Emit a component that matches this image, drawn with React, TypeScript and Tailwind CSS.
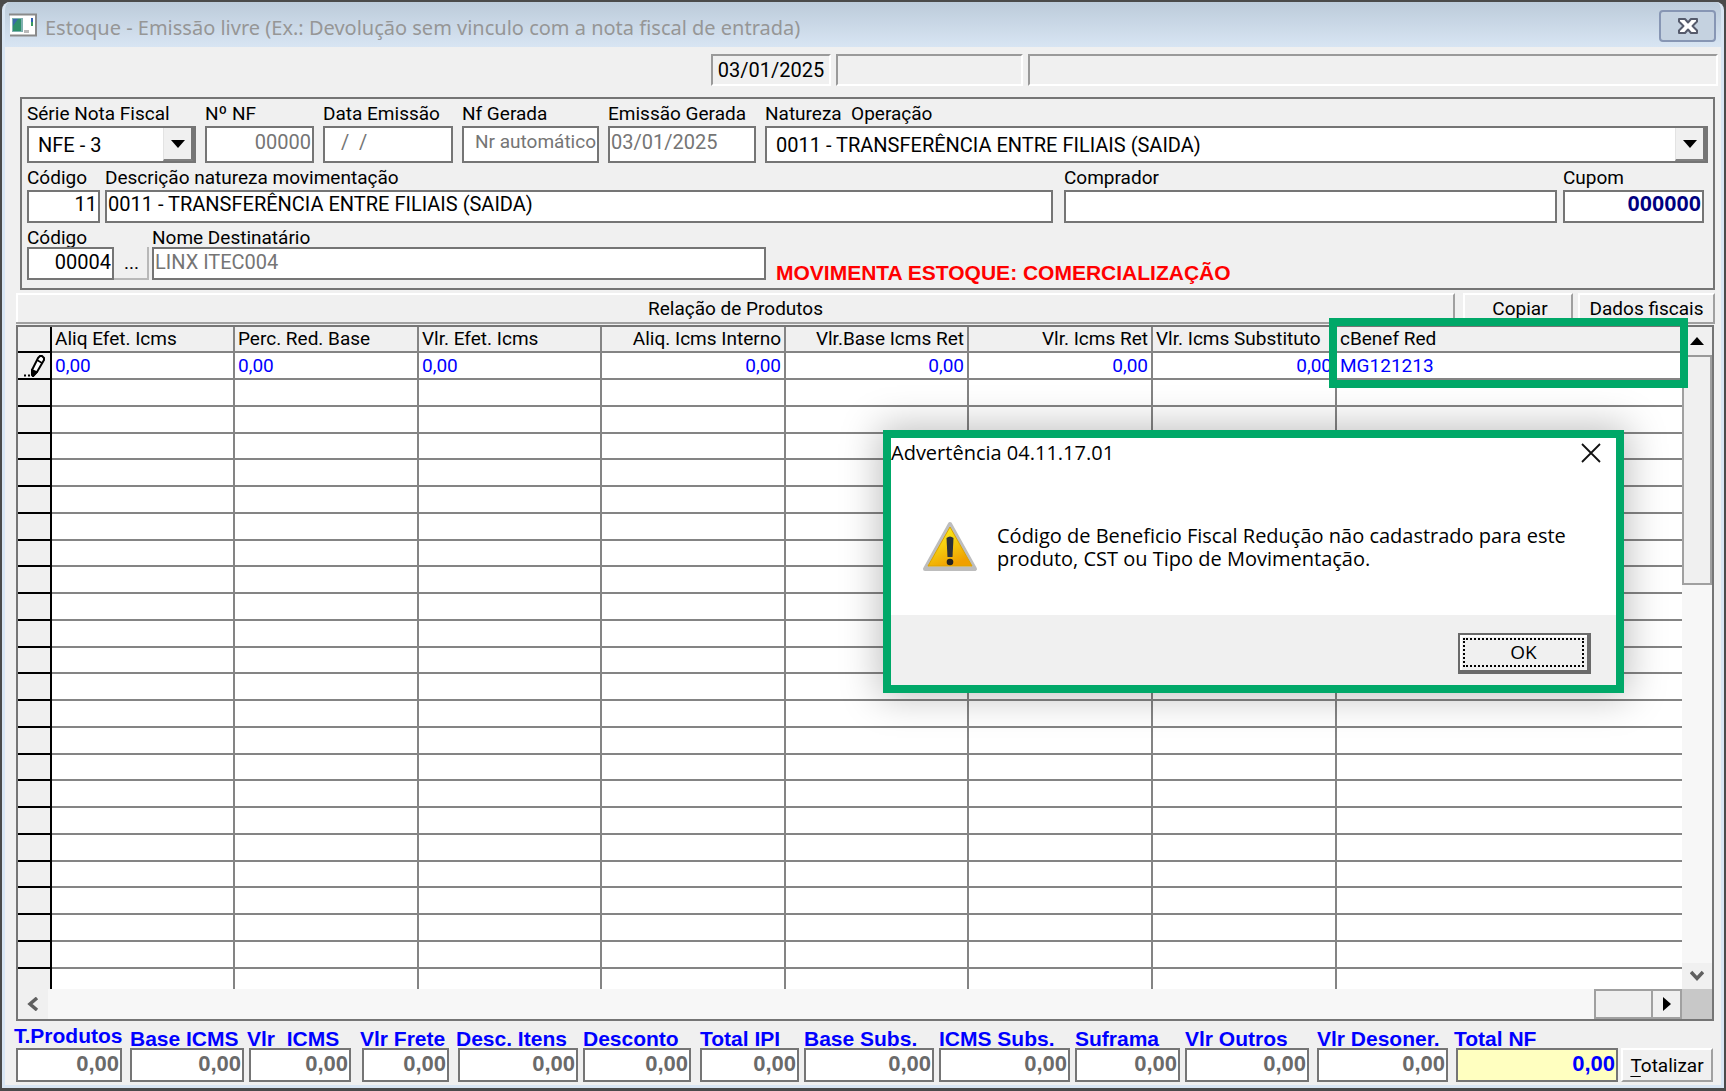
import type { ReactNode } from "react";

const field =
  "min-w-0 w-full border-2 border-[#757575] bg-white px-px outline-none rounded-none";

function Field({
  id,
  label,
  value,
  box,
  input,
  labelClass = "leading-[24px]",
}: {
  id: string;
  label: string;
  value: string;
  box: string;
  input: string;
  labelClass?: string;
}) {
  return (
    <div className={`flex flex-col ${box}`}>
      <label htmlFor={id} className={`h-[24px] whitespace-pre ${labelClass}`}>
        {label}
      </label>
      <input id={id} defaultValue={value} className={`${field} ${input}`} />
    </div>
  );
}

function Combo({ id, label, value, box }: { id: string; label: string; value: string; box: string }) {
  return (
    <div className={`flex flex-col ${box}`}>
      <label htmlFor={id} className="h-[24px] whitespace-pre leading-[24px]">
        {label}
      </label>
      <div className="relative flex h-[37px] border-2 border-[#757575] bg-white">
        <select id={id} className="w-full appearance-none bg-transparent pl-[9px] pr-[34px] text-[20px] outline-none">
          <option>{value}</option>
        </select>
        <span className="pointer-events-none absolute inset-y-0 right-0 flex w-[31px] items-center justify-center border-b-2 border-l border-r-[3px] border-b-[#808080] border-l-[#e3e3e3] border-r-[#757575] bg-[#f0f0f0]">
          <svg width="14" height="8" viewBox="0 0 14 8">
            <path d="M0 0H14L7 8Z" fill="#000" />
          </svg>
        </span>
      </div>
    </div>
  );
}

const columns = [
  { label: "Aliq Efet. Icms", value: "0,00", align: "text-left", head: "text-left w-[183px]" },
  { label: "Perc. Red. Base", value: "0,00", align: "text-left", head: "text-left w-[184px]" },
  { label: "Vlr. Efet. Icms", value: "0,00", align: "text-left", head: "text-left w-[183px]" },
  { label: "Aliq. Icms Interno", value: "0,00", align: "text-right", head: "text-right w-[184px]" },
  { label: "Vlr.Base Icms Ret", value: "0,00", align: "text-right", head: "text-right w-[183px]" },
  { label: "Vlr. Icms Ret", value: "0,00", align: "text-right", head: "text-right w-[184px]" },
  { label: "Vlr. Icms Substituto", value: "0,00", align: "text-right", head: "text-left w-[184px]" },
  { label: "cBenef Red", value: "MG121213", align: "text-left", head: "text-left" },
];

const totals = [
  { label: "T.Produtos", pad: "pr-2", lead: "leading-[20px] -ml-[2px]" },
  { label: "Base ICMS", pad: "pr-[5px]", lead: "leading-[26px]" },
  { label: "Vlr  ICMS", pad: "pr-[11px]", lead: "leading-[26px] -ml-[2px]" },
  { label: "Vlr Frete", pad: "pr-[9px]", lead: "leading-[26px] -ml-[2px]" },
  { label: "Desc. Itens", pad: "pr-[5px]", lead: "leading-[26px] -ml-[2px]" },
  { label: "Desconto", pad: "pr-[9px]", lead: "leading-[26px]" },
  { label: "Total IPI", pad: "pr-[5px]", lead: "leading-[26px]" },
  { label: "Base Subs.", pad: "pr-[5px]", lead: "leading-[26px]" },
  { label: "ICMS Subs.", pad: "pr-[5px]", lead: "leading-[26px]" },
  { label: "Suframa", pad: "pr-[5px]", lead: "leading-[26px]" },
  { label: "Vlr Outros", pad: "pr-2", lead: "leading-[26px]" },
  { label: "Vlr Desoner.", pad: "pr-2", lead: "leading-[26px]" },
  { label: "Total NF", pad: "pr-[3px]", lead: "leading-[26px] -ml-[2px]" },
];

function TitleBar() {
  return (
    <header className="flex h-[45px] shrink-0 items-center bg-linear-to-b from-[#bccbda] to-[#d8e5f3] pl-[4px] pr-[5px]">
      <svg width="28" height="24" viewBox="0 0 28 24" className="shrink-0">
        <rect x="1" y="1" width="25" height="22" fill="#fff" />
        <path d="M0 1.500H27V22.500H1" fill="none" stroke="#8a8a8a" strokeWidth="2" />
        <rect x="3" y="5" width="11" height="14" fill="#7fb0b0" />
        <rect x="4" y="6" width="8" height="12" fill="#2f8f6a" />
        <path d="M4 6H9L4 13Z" fill="#3a68a8" />
        <path d="M15 18.500h5" stroke="#b9b9b9" strokeWidth="3" />
        <rect x="22" y="5" width="2" height="4" fill="#2d5fb0" />
        <rect x="22" y="9" width="2" height="4" fill="#3a9a60" />
      </svg>
      <h1 className="flex-1 pl-[8px] pt-[6px] font-['Noto_Sans',sans-serif] text-[20px] text-[#969696]">
        Estoque - Emissão livre (Ex.: Devolução sem vinculo com a nota fiscal de entrada)
      </h1>
      <button
        aria-label="Fechar"
        className="mt-[8px] flex h-[32px] w-[57px] items-center justify-center self-start rounded-[4px] border-2 border-[#8796b4] bg-[#c5d2e0]"
      >
        <svg width="22" height="18" viewBox="0 0 22 18">
          <path
            d="M2 2H8L11 5.500L14 2H20V4.500L15.500 9L20 13.500V16H14L11 12.500L8 16H2V13.500L6.500 9L2 4.500Z"
            fill="#fff"
            stroke="#565b6c"
            strokeWidth="2"
            strokeLinejoin="round"
          />
        </svg>
      </button>
    </header>
  );
}

function StatusBox({ className, children }: { className: string; children?: ReactNode }) {
  return (
    <div
      className={`flex h-[32px] items-center justify-center border-2 border-b-white border-l-[#9a9a9a] border-r-white border-t-[#9a9a9a] text-[20px] ${className}`}
    >
      {children}
    </div>
  );
}

function ProductGrid() {
  return (
    <section className="mr-[7px] flex min-h-0 flex-1 flex-col overflow-hidden border-2 border-[#757575]">
      <div className="flex min-h-0 flex-1">
        <div className="min-w-0 flex-1 overflow-hidden bg-white">
          <table className="w-full table-fixed border-separate border-spacing-0">
            <thead>
              <tr className="h-[26px]">
                <th className="w-[34px] border-b-2 border-r-2 border-black bg-[#f0f0f0]" aria-label="Linha" />
                {columns.map((c, i) => (
                  <th
                    key={c.label}
                    className={`whitespace-nowrap border-b-2 border-[#848484] bg-[#f0f0f0] px-[3px] py-0 font-normal leading-[24px] ${c.head} ${i < 7 ? "border-r-2" : ""}`}
                  >
                    {c.label}
                  </th>
                ))}
              </tr>
            </thead>
            <tbody>
              {Array.from({ length: 24 }, (_, r) => (
                <tr key={r} className="h-[27px] nth-[4n]:h-[26px]">
                  <td className="border-b-2 border-r-2 border-black bg-[#f0f0f0] p-0">
                    {r === 0 && (
                      <svg width="22" height="22" viewBox="0 0 22 22" className="ml-[6px] block">
                        <path d="M14 3L16 1H18L20 3V5L13 17L9 21L8 20V15Z" fill="#fff" stroke="#000" strokeWidth="2" />
                        <path d="M13 5L18 8M8 15L13 17L9 21.500Z" stroke="#000" strokeWidth="1.500" fill="#000" />
                        <path d="M0 20.500h2M4 20.500h2" stroke="#000" strokeWidth="2" />
                      </svg>
                    )}
                  </td>
                  {columns.map((c, i) => (
                    <td
                      key={c.label}
                      className={`border-b-2 border-[#848484] px-[3px] py-0 leading-[24px] text-[#0000ff] ${c.align} ${i < 7 ? "border-r-2" : ""}`}
                    >
                      {r === 0 ? c.value : ""}
                    </td>
                  ))}
                </tr>
              ))}
            </tbody>
          </table>
        </div>
        <div className="flex w-[30px] shrink-0 flex-col bg-[#f7f7f7]">
          <button aria-label="Rolar para cima" className="flex h-[30px] items-center justify-center border-b-2 border-[#999] bg-[#f0f0f0]">
            <svg width="14" height="8" viewBox="0 0 14 8">
              <path d="M0 8H14L7 0Z" fill="#000" />
            </svg>
          </button>
          <div className="h-[228px] border-2 border-t-0 border-[#a0a0a0] bg-[#f0f0f0]" />
          <div className="flex-1" />
          <button aria-label="Rolar para baixo" className="flex h-[26px] items-center justify-center bg-[#f0f0f0]">
            <svg width="14" height="12" viewBox="0 0 14 12">
              <path d="M1 2L7 8.500L13 2" fill="none" stroke="#606060" strokeWidth="3.500" />
            </svg>
          </button>
        </div>
      </div>
      <div className="flex h-[30px] shrink-0 bg-[#f7f7f7]">
        <button aria-label="Rolar para a esquerda" className="flex w-[30px] items-center justify-center bg-[#f0f0f0]">
          <svg width="12" height="14" viewBox="0 0 12 14">
            <path d="M10 1L3 7L10 13" fill="none" stroke="#606060" strokeWidth="3.500" />
          </svg>
        </button>
        <div className="flex-1" />
        <div className="w-[59px] border-2 border-[#a0a0a0] bg-[#f0f0f0]" />
        <button aria-label="Rolar para a direita" className="flex w-[29px] items-center justify-center border-2 border-l-0 border-[#a0a0a0] bg-[#f0f0f0]">
          <svg width="8" height="14" viewBox="0 0 8 14">
            <path d="M0 0V14L8 7Z" fill="#000" />
          </svg>
        </button>
        <div className="w-[30px] bg-[#c8c8c8]" />
      </div>
    </section>
  );
}

function WarningDialog() {
  return (
    <div
      role="dialog"
      aria-label="Advertência 04.11.17.01"
      className="absolute left-[883px] top-[430px] flex h-[263px] w-[741px] flex-col border-8 border-[#00a868] bg-white font-['Open_Sans',sans-serif] text-black shadow-[0_0_36px_4px_rgba(0,0,0,0.25)]"
    >
      <div className="flex h-[30px] items-center justify-between pr-[15px]">
        <h2 className="text-[20px]">Advertência 04.11.17.01</h2>
        <button aria-label="Fechar aviso">
          <svg width="20" height="20" viewBox="0 0 20 20">
            <path d="M1 1L19 19M19 1L1 19" stroke="#111" strokeWidth="1.800" />
          </svg>
        </button>
      </div>
      <div className="flex flex-1 items-center gap-[19px] pl-[31px] pt-[10px]">
        <svg width="56" height="52" viewBox="0 0 56 52" className="shrink-0">
          <defs>
            <linearGradient id="sign" x1="0" y1="0" x2="0.500" y2="1">
              <stop offset="0.100" stopColor="#fff01a" />
              <stop offset="0.500" stopColor="#f6d010" />
              <stop offset="1" stopColor="#f0a000" />
            </linearGradient>
          </defs>
          <path d="M28 3L53 48H3Z" fill="#cfcfcf" stroke="#bdbdbd" strokeWidth="4" strokeLinejoin="round" />
          <path d="M28 6L50 45H6Z" fill="url(#sign)" stroke="#dca400" strokeWidth="1" strokeLinejoin="round" />
          <path d="M24.500 17Q28 14 31.500 17L30.500 36H25.500Z" fill="#2b3038" />
          <circle cx="28" cy="41" r="3.300" fill="#222" />
        </svg>
        <p className="w-[585px] text-[20px] leading-[23px]">
          Código de Beneficio Fiscal Redução não cadastrado para este produto, CST ou Tipo de Movimentação.
        </p>
      </div>
      <div className="flex h-[70px] items-center justify-end bg-[#f0f0f0] pr-[25px] pt-[6px]">
        <button className="flex h-[41px] w-[133px] border-2 border-b-4 border-r-4 border-[#6a6a6a] p-[3px] shadow-[inset_2px_2px_0_#fff]">
          <span className="flex flex-1 items-center justify-center border-2 border-dotted border-black text-[19px] leading-[20px]">OK</span>
        </button>
      </div>
    </div>
  );
}

const raised = "border-l-2 border-r-2 border-t-2 border-l-white border-r-[#a0a0a0] border-t-white";

export default function App() {
  return (
    <main className="relative flex h-screen min-h-[700px] flex-col overflow-hidden bg-[#4a4a4a] px-[2px] pb-[3px] pt-[2px] font-[Roboto,sans-serif] text-[19px] text-black">
      <div className="flex min-h-0 flex-1 flex-col overflow-hidden rounded-t-[8px] border-x-[3px] border-b-[3px] border-[#d8e5f3] bg-[#f0f0f0]">
        <TitleBar />
        <div className="flex min-h-0 flex-1 flex-col pl-[11px]">
          <div className="mt-[7px] flex shrink-0 gap-[5px] pl-[695px]">
            <StatusBox className="w-[120px]">03/01/2025</StatusBox>
            <StatusBox className="w-[187px]" />
            <StatusBox className="mr-[3px] flex-1" />
          </div>

          <form className="ml-[4px] mr-[6px] mt-[11px] flex h-[193px] shrink-0 flex-col border-2 border-[#757575] px-[5px] pt-[3px]">
            <div className="flex gap-[9px]">
              <Combo id="serie" label="Série Nota Fiscal" value="NFE - 3" box="w-[169px]" />
              <Field id="nf" label="Nº NF" value="00000" box="w-[109px]" input="h-[37px] pb-[6px] text-right text-[20px] text-[#757575]" />
              <Field id="data" label="Data Emissão" value="   /  /" box="w-[130px]" input="h-[37px] pb-[6px] text-[20px] text-[#757575]" />
              <Field id="gerada" label="Nf Gerada" value="Nr automático" box="w-[137px]" input="h-[37px] pb-[6px] text-right text-[#757575]" />
              <Field id="emissao" label="Emissão Gerada" value="03/01/2025" box="w-[148px]" input="h-[37px] pb-[6px] text-[20px] text-[#757575]" />
              <Combo id="natureza" label="Natureza  Operação" value="0011 - TRANSFERÊNCIA ENTRE FILIAIS (SAIDA)" box="flex-1" />
            </div>
            <div className="mt-[3px] flex">
              <Field id="codnat" label="Código" value="11" box="w-[73px]" input="h-[33px] pb-[6px] text-right text-[20px]" />
              <Field id="descnat" label="Descrição natureza movimentação" value="0011 - TRANSFERÊNCIA ENTRE FILIAIS (SAIDA)" box="ml-[5px] flex-[948]" input="h-[33px] pb-[6px] text-[20px]" />
              <Field id="comprador" label="Comprador" value="" box="ml-[11px] flex-[493]" input="h-[33px] text-[20px]" />
              <Field
                id="cupom"
                label="Cupom"
                value="000000"
                box="ml-[6px] mr-[4px] w-[141px]"
                input="h-[33px] pb-[6px] text-right font-['Liberation_Sans',sans-serif] text-[22px] font-bold text-[#000080]"
              />
            </div>
            <div className="flex items-end">
              <Field id="coddest" label="Código" value="00004" box="w-[87px]" labelClass="leading-[30px]" input="h-[33px] pb-[4px] text-right text-[20px]" />
              <button type="button" aria-label="Buscar destinatário" className="h-[33px] w-[35px] border-b-2 border-r-2 border-[#b8b8b8] pl-[2px] pt-[2px]">
                ...
              </button>
              <Field id="nome" label="Nome Destinatário" value="LINX ITEC004" box="ml-[3px] w-[614px]" labelClass="leading-[30px]" input="h-[33px] pb-[4px] text-[20px] text-[#757575]" />
              <strong className="ml-[10px] font-['Liberation_Sans',sans-serif] text-[21px] leading-[14px] text-[#ff0000]">
                MOVIMENTA ESTOQUE: COMERCIALIZAÇÃO
              </strong>
            </div>
          </form>

          <div className="mr-[6px] mt-[3px] flex h-[31px] shrink-0 border-b-2 border-[#a0a0a0]">
            <h2 className={`flex flex-1 items-center justify-center pt-[2px] ${raised}`}>Relação de Produtos</h2>
            <button className={`ml-[8px] w-[110px] pl-[4px] ${raised}`}>Copiar</button>
            <button className={`ml-[5px] w-[137px] ${raised}`}>Dados fiscais</button>
          </div>
          <div className="h-[1px] shrink-0" />
          <ProductGrid />

          <div className="mr-[2px] grid h-[64px] shrink-0 grid-cols-[114fr_119fr_113fr_96fr_125fr_117fr_104fr_135fr_136fr_110fr_132fr_139fr_165fr_98fr]">
            {totals.map((t, i) => (
              <div key={t.label} className={`flex min-w-0 flex-col pt-[5px] ${t.pad}`}>
                <label
                  htmlFor={`total${i}`}
                  className={`h-[22px] whitespace-pre font-['Liberation_Sans',sans-serif] text-[21px] font-bold text-[#0000ff] ${t.lead}`}
                >
                  {t.label}
                </label>
                <input
                  id={`total${i}`}
                  defaultValue="0,00"
                  className={`h-[34px] w-full min-w-0 border-2 border-[#757575] px-px pb-[3px] text-right font-['Liberation_Sans',sans-serif] text-[22px] font-bold outline-none ${i === 12 ? "bg-[#ffffc0] text-[#0000ff]" : "bg-white text-[#6a6a6a]"}`}
                />
              </div>
            ))}
            <button className={`mr-[6px] mt-[27px] h-[34px] border-b-2 border-b-[#a0a0a0] pt-[2px] ${raised}`}>
              <span className="underline underline-offset-4">T</span>otalizar
            </button>
          </div>
        </div>
      </div>

      <div className="pointer-events-none absolute left-[1329px] top-[318px] h-[70px] w-[359px] border-8 border-[#00a868]" />
      <WarningDialog />
    </main>
  );
}
